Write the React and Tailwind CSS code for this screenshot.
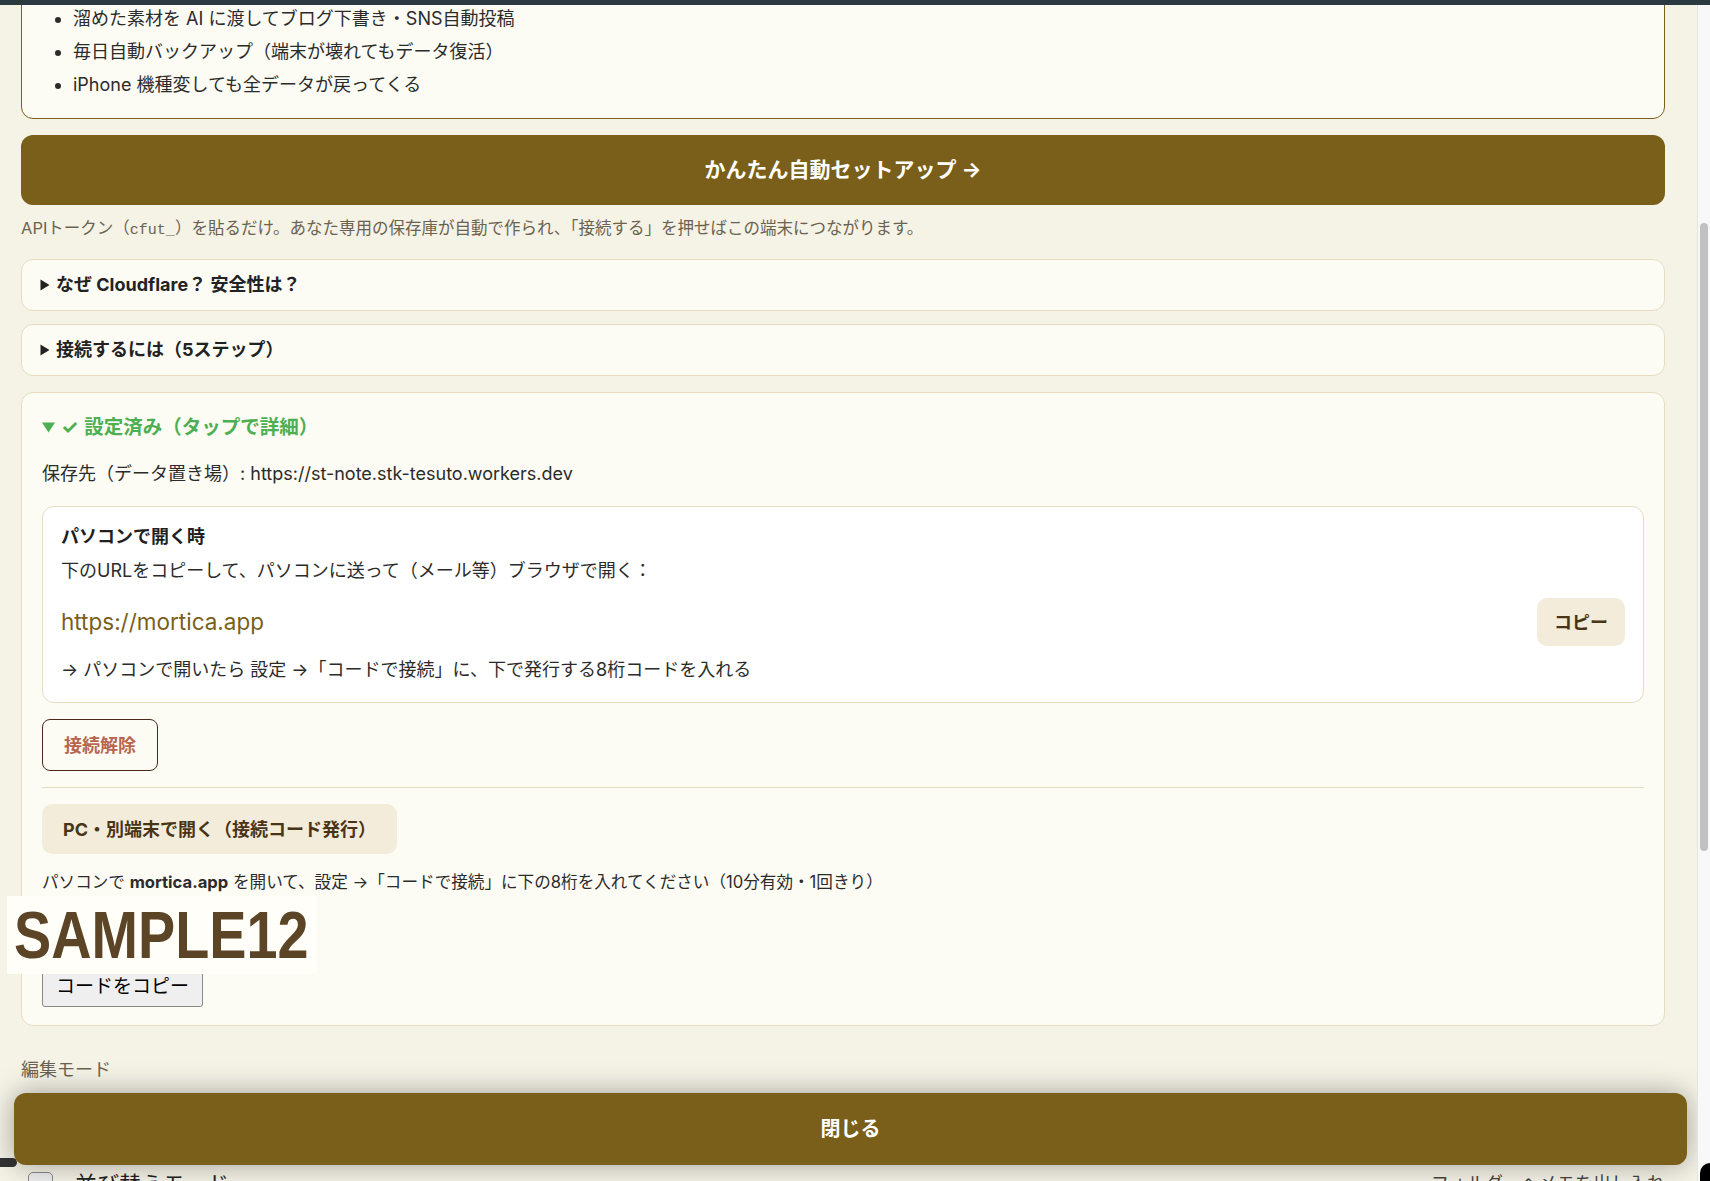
import React from 'react';

const FONT = "font-['Inter','Noto_Sans_CJK_JP',sans-serif]";

function Triangle({ open = false, className = '' }) {
    // small disclosure marker, like the native <details> one
    return open ? (
        <svg width="13" height="11" viewBox="0 0 13 11" className={className}>
            <path d="M0 0.5h13L6.5 10.5z" fill="currentColor" />
        </svg>
    ) : (
        <svg width="10" height="12" viewBox="0 0 10 12" className={className}>
            <path d="M0.5 0.5L9.5 6L0.5 11.5z" fill="currentColor" />
        </svg>
    );
}

function Accordion({ title }) {
    return (
        <div className="rounded-xl border border-[#e8dcc0] bg-[#fcfbf4] px-[18px] py-[13px]">
            <div className="flex items-center gap-[6px] text-[18px] font-bold leading-6 text-[#222]">
                <Triangle className="text-[#222]" />
                <span>{title}</span>
            </div>
        </div>
    );
}

export default function App() {
    return (
        <div className={`flex h-[1181px] w-full flex-col overflow-hidden bg-[#f5f2e6] ${FONT}`}>
            <div className="h-[5px] shrink-0 bg-[#2b3a40]" />
            <div className="flex min-h-0 flex-1">
                {/* scroll area */}
                <div className="relative min-w-0 flex-1 overflow-hidden">
                    <div className="pl-[21px] pr-[32px]">
                        {/* features card (scrolled, top hidden) */}
                        <div className="-mt-[20px] rounded-xl border border-[#7a5f1a] bg-[#fcfbf4] px-5 pt-5 pb-[21px]">
                            <ul className="list-disc space-y-2 pl-[31px] text-[18px] leading-[25px] text-[#2b2b2b]">
                                <li>溜めた素材を AI に渡してブログ下書き・SNS自動投稿</li>
                                <li>毎日自動バックアップ（端末が壊れてもデータ復活）</li>
                                <li>iPhone 機種変しても全データが戻ってくる</li>
                            </ul>
                        </div>

                        <button className="mt-4 flex h-[70px] w-full items-center justify-center rounded-xl bg-[#7a5f1a] text-[21px] font-bold text-white">
                            かんたん自動セットアップ →
                        </button>
                        <p className="mt-[13px] text-[16.5px] leading-5 text-[#6b6350]">
                            APIトークン（<span className="font-['Liberation_Mono',monospace] text-[15px]">cfut_</span>）を貼るだけ。あなた専用の保存庫が自動で作られ、「接続する」を押せばこの端末につながります。
                        </p>

                        <div className="mt-[18px] flex flex-col gap-[13px]">
                            <Accordion title="なぜ Cloudflare？ 安全性は？" />
                            <Accordion title="接続するには（5ステップ）" />
                        </div>

                        {/* open: connected */}
                        <div className="relative mt-[16px] rounded-xl border border-[#e8dcc0] bg-[#fcfbf4] px-5 pt-5 pb-[18px]">
                            <div className="flex items-center text-[19.5px] font-bold leading-[28px] text-[#4caf50]">
                                <Triangle open />
                                <span className="ml-[6px]">✓</span>
                                <span className="ml-[6px]">設定済み（タップで詳細）</span>
                            </div>
                            <p className="mt-[21px] text-[18px] leading-6 text-[#2b2b2b]">
                                保存先（データ置き場）: https://st-note.stk-tesuto.workers.dev
                            </p>

                            <div className="mt-5 rounded-xl border border-[#e5dcc2] bg-white px-[18px] pt-[18px] pb-5">
                                <div className="text-[18px] font-bold leading-6 text-[#1f1f1f]">パソコンで開く時</div>
                                <p className="mt-[10px] text-[18px] leading-6 text-[#2b2b2b]">
                                    下のURLをコピーして、パソコンに送って（メール等）ブラウザで開く：
                                </p>
                                <div className="mt-[15px] flex items-center justify-between">
                                    <span className="text-[22.5px] leading-7 text-[#7a5f1a]">https://mortica.app</span>
                                    <button className="h-12 rounded-[10px] bg-[#f3ecda] px-[17px] text-[18px] font-bold text-[#4a3418]">
                                        コピー
                                    </button>
                                </div>
                                <p className="mt-3 text-[18px] leading-6 text-[#2b2b2b]">
                                    → パソコンで開いたら 設定 →「コードで接続」に、下で発行する8桁コードを入れる
                                </p>
                            </div>

                            <button className="mt-4 h-[52px] rounded-lg border border-[#4a2a1e] px-[21px] text-[18px] font-bold text-[#b8654f]">
                                接続解除
                            </button>

                            <div className="my-4 h-px bg-[#e5dcc2]" />

                            <button className="h-[50px] rounded-[10px] bg-[#f3ecda] px-[21px] text-[18px] font-bold text-[#4a3418]">
                                PC・別端末で開く（接続コード発行）
                            </button>
                            <p className="mt-4 text-[16.6px] leading-6 text-[#2b2b2b]">
                                パソコンで <b className="font-bold">mortica.app</b> を開いて、設定 →「コードで接続」に下の8桁を入れてください（10分有効・1回きり）
                            </p>

                            {/* issued code (masked) */}
                            <div className="relative h-[73px]">
                                <div className="absolute top-[2px] -left-[35px] z-10 flex h-[78px] w-[310px] items-center bg-[#fffef9] pl-[7px]">
                                    <span className="origin-left scale-x-[0.845] whitespace-nowrap font-['Liberation_Sans',sans-serif] text-[66px] font-bold leading-none text-[#5c4526]">
                                        SAMPLE12
                                    </span>
                                </div>
                            </div>

                            <button className="h-10 rounded-[3px] border border-[#8a8a8a] bg-[#efefef] px-[13px] text-[19px] text-black">
                                コードをコピー
                            </button>
                        </div>

                        <div className="mt-[34px] text-[18px] leading-5 text-[#6b6350]">編集モード</div>

                        <div className="h-[78px]" />
                        <div className="-ml-[21px] h-[9px] w-[17px] rounded-r-full bg-[#333]" />
                        <div className="mt-[5px] flex items-start justify-between">
                            <div className="flex items-start gap-[22px] pl-[7px]">
                                <span className="h-[25px] w-[25px] rounded-[5px] border border-[#8a8a8a] bg-[#eeeeee]" />
                                <span className="text-[22px] leading-6 text-[#222]">並び替えモード</span>
                            </div>
                            <span className="text-[18px] leading-6 text-[#444]">フォルダーへメモを出し入れ</span>
                        </div>
                    </div>

                    {/* floating close button */}
                    <button className="absolute right-[10px] bottom-[16px] left-[14px] h-[72px] rounded-xl bg-[#7a5f1a] text-[20px] font-bold text-white shadow-[0_0_28px_rgba(0,0,0,0.35)]">
                        閉じる
                    </button>
                </div>

                {/* scrollbar */}
                <div className="relative w-[13px] shrink-0 border-l border-[#e4e4e4] bg-[#f8f8f8]">
                    <div className="absolute top-[218px] left-[2px] h-[628px] w-[8px] rounded-full bg-[#c1c1c1]" />
                    <div className="absolute right-0 bottom-0 h-[18px] w-[10px] rounded-tl-[10px] bg-black" />
                </div>
            </div>
        </div>
    );
}
